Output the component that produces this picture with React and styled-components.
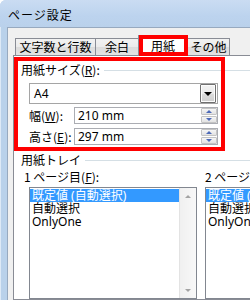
import React from 'react';
import styled, { createGlobalStyle } from 'styled-components';

const GlobalStyle = createGlobalStyle`
  html, body {
    margin: 0;
    padding: 0;
    background: #ffffff;
  }
  body {
    font-family: "Noto Sans CJK JP", "Noto Sans", sans-serif;
    font-size: 12px;
    color: #000;
  }
`;

const Window = styled.div`
  position: relative;
  width: 250px;
  height: 300px;
  overflow: hidden;
  display: flex;
  flex-direction: column;
  background: #b9d1ea;
  border-top-left-radius: 6px;
`;

const TitleBar = styled.div`
  flex: none;
  height: 27px;
  box-sizing: border-box;
  padding: 8px 0 0 8px;
  background: linear-gradient(180deg, #cadcf2 0%, #bcd3ee 60%, #bad1eb 100%);
  font-size: 12px;
  line-height: 14px;
  letter-spacing: 1px;
`;

const Frame = styled.div`
  flex: 1;
  display: flex;
  min-height: 0;
`;

const FrameEdge = styled.div`
  flex: none;
  width: 7px;
  background: linear-gradient(90deg, #dde9f6 0 1px, #b9d1ea 1px 100%);
`;

const Body = styled.div`
  flex: 1;
  min-width: 0;
  overflow: hidden;
  display: flex;
  flex-direction: column;
  background: #f0f0f0;
  border-left: 1px solid #97a9bf;
  border-top: 1px solid #97a9bf;
  padding: 7px 0 0 5px;
`;

const TabRow = styled.div`
  display: flex;
  align-items: flex-end;
  height: 21px;
  margin: 0 0 -1px 2px;
  position: relative;
  z-index: 1;
`;

const Tab = styled.div`
  box-sizing: border-box;
  width: ${p => p.$w}px;
  height: ${p => (p.$active ? 21 : 18)}px;
  padding-top: ${p => (p.$active ? 2 : 0)}px;
  border: 1px solid #898c95;
  border-bottom: ${p => (p.$active ? 'none' : '1px solid #898c95')};
  border-left-width: ${p => (p.$first || p.$active ? 1 : 0)}px;
  border-right-width: ${p => (p.$beforeActive ? 0 : 1)}px;
  background: ${p => (p.$active ? '#ffffff' : 'linear-gradient(180deg, #f2f2f2 0%, #ebebeb 50%, #dcdcdc 51%, #e3e3e3 100%)')};
  text-align: center;
  line-height: 16px;
  white-space: nowrap;
`;

const Panel = styled.div`
  flex: 1;
  width: 260px;
  box-sizing: border-box;
  background: #ffffff;
  border: 1px solid #898c95;
  padding: 7px 0 0 7px;
`;

const GroupHeader = styled.div`
  display: flex;
  align-items: center;
  height: 14px;
  line-height: 14px;
  margin-top: ${p => p.$top || 0}px;
  white-space: nowrap;
`;

const HeaderLine = styled.div`
  flex: 1;
  height: 1px;
  margin-left: 4px;
  background: #d5dfe5;
`;

const GroupBody = styled.div`
  width: 189px;
  padding-left: 8px;
`;

const Select = styled.div`
  box-sizing: border-box;
  height: 21px;
  margin-top: 6px;
  display: flex;
  align-items: center;
  border: 1px solid #a5a5a5;
  padding: 0 1px 0 4px;
  background: #fff;
`;

const FieldText = styled.div`
  flex: 1;
  line-height: 16px;
  font-family: "Noto Sans", "Noto Sans CJK JP", sans-serif;
`;

const DropButton = styled.div`
  box-sizing: border-box;
  width: 16px;
  height: 19px;
  border: 1px solid #707070;
  border-radius: 1px;
  background: linear-gradient(180deg, #f2f2f2 0%, #ebebeb 50%, #dddddd 51%, #cfcfcf 100%);
  box-shadow: inset 0 0 0 1px #fcfcfc;
  display: flex;
  align-items: center;
  justify-content: center;

  &::after {
    content: '';
    border-left: 4px solid transparent;
    border-right: 4px solid transparent;
    border-top: 4px solid #000;
  }
`;

const FieldRow = styled.div`
  display: flex;
  align-items: center;
  margin-top: ${p => p.$top}px;
  height: 17px;
`;

const FieldLabel = styled.div`
  width: 45px;
  line-height: 14px;
  white-space: nowrap;
`;

const Input = styled.div`
  flex: 1;
  box-sizing: border-box;
  height: 17px;
  display: flex;
  align-items: center;
  border: 1px solid #abadb3;
  padding: 0 0 0 3px;
`;

const Spinner = styled.div`
  width: 16px;
  height: 15px;
  display: flex;
  flex-direction: column;
  gap: 1px;
`;

const SpinButton = styled.div`
  box-sizing: border-box;
  flex: 1;
  border: 1px solid #c4c4c4;
  border-radius: 1px;
  background: linear-gradient(180deg, #f6f6f6, #e2e2e2);
  display: flex;
  align-items: center;
  justify-content: center;

  &::after {
    content: '';
    border-left: 3px solid transparent;
    border-right: 3px solid transparent;
    ${p => (p.$up ? 'border-bottom: 3px solid #4d6ab8;' : 'border-top: 3px solid #4d6ab8;')}
  }
`;

const Trays = styled.div`
  display: flex;
  gap: 8px;
  margin-top: 3px;
  padding-left: 8px;
`;

const TrayColumn = styled.div`
  flex: none;
  display: flex;
  flex-direction: column;
`;

const TrayLabel = styled.div`
  height: 14px;
  line-height: 14px;
  margin-left: ${p => p.$shift || 0}px;
  white-space: nowrap;
`;

const ListBox = styled.div`
  box-sizing: border-box;
  width: ${p => p.$w}px;
  height: 112px;
  margin-top: 3px;
  border: 1px solid #828790;
  display: flex;
  background: #fff;
`;

const ListItems = styled.div`
  flex: 1;
  min-width: 0;
  overflow: hidden;
  padding-top: 1px;
`;

const ListItem = styled.div`
  height: 13px;
  line-height: 13px;
  padding-left: 2px;
  white-space: nowrap;
  background: ${p => (p.$selected ? '#3399ff' : 'transparent')};
  color: ${p => (p.$selected ? '#ffffff' : '#000000')};
  font-family: "Noto Sans", "Noto Sans CJK JP", sans-serif;
`;

const ScrollBar = styled.div`
  flex: none;
  width: 17px;
  background: linear-gradient(90deg, #e3e3e3 0 1px, #f0f0f0 1px, #f8f8f8 100%);
  display: flex;
  flex-direction: column;
  justify-content: space-between;
  align-items: center;
  padding: 7px 0 6px;
  box-sizing: border-box;
`;

const ScrollArrow = styled.div`
  width: 0;
  height: 0;
  border-left: 3px solid transparent;
  border-right: 3px solid transparent;
  ${p => (p.$up ? 'border-bottom: 3px solid #a3a3a3;' : 'border-top: 3px solid #a3a3a3;')}
`;

// red annotation frames drawn over the dialog
const Highlight = styled.div`
  position: absolute;
  box-sizing: border-box;
  border: 4px solid #ff0000;
  pointer-events: none;
  z-index: 5;
`;

const trayItems = ['既定値 (自動選択)', '自動選択', 'OnlyOne'];

const TrayList = ({ label, shift, width, scroll }) => (
  <TrayColumn>
    <TrayLabel $shift={shift}>{label}</TrayLabel>
    <ListBox $w={width}>
      <ListItems>
        {trayItems.map((item, i) => (
          <ListItem key={item} $selected={i === 0}>{item}</ListItem>
        ))}
      </ListItems>
      {scroll && (
        <ScrollBar>
          <ScrollArrow $up />
          <ScrollArrow />
        </ScrollBar>
      )}
    </ListBox>
  </TrayColumn>
);

const SpinField = ({ label, value, top }) => (
  <FieldRow $top={top}>
    <FieldLabel>{label}</FieldLabel>
    <Input>
      <FieldText>{value}</FieldText>
      <Spinner>
        <SpinButton $up />
        <SpinButton />
      </Spinner>
    </Input>
  </FieldRow>
);

const App = () => (
  <>
    <GlobalStyle />
    <Window>
      <TitleBar>ページ設定</TitleBar>
      <Frame>
        <FrameEdge />
        <Body>
          <TabRow>
            <Tab $w={81} $first>文字数と行数</Tab>
            <Tab $w={42} $beforeActive>余白</Tab>
            <Tab $w={50} $active>用紙</Tab>
            <Tab $w={42}>その他</Tab>
          </TabRow>
          <Panel>
            <GroupHeader>
              用紙サイズ(<u>R</u>):
              <HeaderLine />
            </GroupHeader>
            <GroupBody>
              <Select>
                <FieldText>A4</FieldText>
                <DropButton />
              </Select>
              <SpinField label={<>幅(<u>W</u>):</>} value="210 mm" top={3} />
              <SpinField label={<>高さ(<u>E</u>):</>} value="297 mm" top={4} />
            </GroupBody>
            <GroupHeader $top={8}>
              用紙トレイ
              <HeaderLine />
            </GroupHeader>
            <Trays>
              <TrayList label={<>1 ページ目(<u>F</u>):</>} shift={-5} width={168} scroll />
              <TrayList label="2 ページ目(S):" width={168} />
            </Trays>
          </Panel>
        </Body>
      </Frame>
      <Highlight style={{ left: 139, top: 35, width: 49, height: 21 }} />
      <Highlight style={{ left: 14, top: 57, width: 211, height: 94 }} />
    </Window>
  </>
);

export default App;
